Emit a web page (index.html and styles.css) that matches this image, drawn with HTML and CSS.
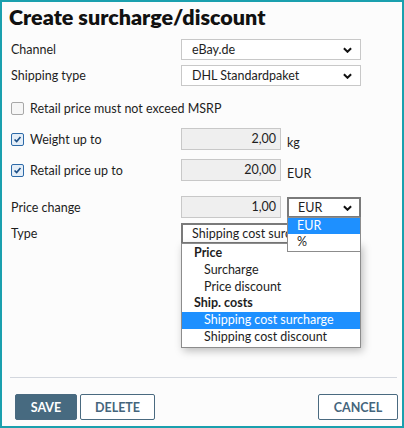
FILE: index.html
```html
<!DOCTYPE html>
<html lang="en">
<head>
    <meta charset="UTF-8">
    <title>Create surcharge/discount</title>
    <link rel="stylesheet" href="styles.css">
</head>
<body>
    <div class="dialog">
        <h1>Create surcharge/discount</h1>

        <div class="row row-channel">
            <label>Channel</label>
            <div class="select">eBay.de
                <svg class="chevron" viewBox="0 0 10 6"><polyline points="1,1 5,5 9,1"/></svg>
            </div>
        </div>
        <div class="row row-shipping">
            <label>Shipping type</label>
            <div class="select">DHL Standardpaket
                <svg class="chevron" viewBox="0 0 10 6"><polyline points="1,1 5,5 9,1"/></svg>
            </div>
        </div>

        <div class="check-row row-msrp">
            <span class="checkbox"></span>
            <span>Retail price must not exceed MSRP</span>
        </div>

        <div class="row row-weight">
            <div class="check-row">
                <span class="checkbox checked">
                    <svg viewBox="0 0 13 13"><polyline points="3,6.5 5.5,9 10,3.5"/></svg>
                </span>
                <span>Weight up to</span>
            </div>
            <div class="input">2,00</div>
            <span class="unit">kg</span>
        </div>
        <div class="row row-retail">
            <div class="check-row">
                <span class="checkbox checked">
                    <svg viewBox="0 0 13 13"><polyline points="3,6.5 5.5,9 10,3.5"/></svg>
                </span>
                <span>Retail price up to</span>
            </div>
            <div class="input">20,00</div>
            <span class="unit">EUR</span>
        </div>

        <div class="row row-price">
            <label>Price change</label>
            <div class="input">1,00</div>
            <div class="currency">
                <div class="select open small">EUR
                    <svg class="chevron" viewBox="0 0 10 6"><polyline points="1,1 5,5 9,1"/></svg>
                </div>
                <ul class="options currency-options">
                    <li class="selected">EUR</li>
                    <li>%</li>
                </ul>
            </div>
        </div>
        <div class="row row-type">
            <label>Type</label>
            <div class="type-wrap">
                <div class="select open"><span class="clip">Shipping cost surcharge</span></div>
                <ul class="options type-options">
                    <li class="group">Price</li>
                    <li class="sub">Surcharge</li>
                    <li class="sub">Price discount</li>
                    <li class="group">Ship. costs</li>
                    <li class="sub selected">Shipping cost surcharge</li>
                    <li class="sub">Shipping cost discount</li>
                </ul>
            </div>
        </div>

        <div class="spacer"></div>
        <hr class="divider">
        <div class="actions">
            <button class="btn btn-primary">SAVE</button>
            <button class="btn btn-delete">DELETE</button>
            <button class="btn btn-cancel">CANCEL</button>
        </div>
    </div>
</body>
</html>
```

FILE: styles.css
```css
html, body {
    margin: 0;
    padding: 0;
}
body {
    font-family: 'Lato', 'Noto Sans', sans-serif;
    font-size: 12.5px;
    color: #1e1e1e;
    background: #fcfcfc;
}
.dialog {
    box-sizing: border-box;
    width: 404px;
    height: 428px;
    border: 2px solid #1aa0ae;
    padding: 0 9px 0 9px;
    display: flex;
    flex-direction: column;
    background: #fcfcfc;
}
h1 {
    margin: 2px 0 0 -2px;
    font-size: 21.5px;
    line-height: 26px;
    font-weight: 800;
    color: #111;
}
.row {
    display: flex;
    align-items: center;
}
.row > label,
.row > .check-row {
    width: 170px;
    flex: none;
}
.row-channel { margin-top: 9px; }
.row-shipping { margin-top: 5px; }
.row-msrp { margin-top: 15px; }
.row-weight { margin-top: 12px; }
.row-retail { margin-top: 9px; }
.row-price { margin-top: 15px; }
.row-type { margin-top: 5px; align-items: flex-start; }
.row-type > label { margin-top: 3px; }

.select {
    position: relative;
    box-sizing: border-box;
    width: 180px;
    height: 21px;
    line-height: 19px;
    border: 1px solid #c8c8c8;
    background: #fff;
    padding-left: 10px;
    white-space: nowrap;
    overflow: hidden;
}
.select.open {
    border: 2px solid #7a7a7a;
    line-height: 17px;
    padding-left: 9px;
}
.select.small {
    width: 74px;
}
.clip {
    display: inline-block;
    width: 95px;
    overflow: hidden;
    white-space: nowrap;
    vertical-align: top;
}
.chevron {
    position: absolute;
    right: 8px;
    top: 7px;
    width: 9px;
    height: 6px;
    fill: none;
    stroke: #111;
    stroke-width: 2.2;
}
.select.open .chevron {
    top: 6px;
    right: 7px;
}

.check-row {
    display: flex;
    align-items: center;
    gap: 6px;
}
.checkbox {
    box-sizing: border-box;
    width: 13px;
    height: 13px;
    border: 1px solid #a8a8a8;
    border-radius: 2px;
    background: #f6f6f6;
    display: inline-block;
}
.checkbox.checked {
    border-color: #2d6aa8;
    background: #e4eef8;
}
.checkbox svg {
    display: block;
    width: 11px;
    height: 11px;
    fill: none;
    stroke: #1c4f86;
    stroke-width: 2;
}

.input {
    box-sizing: border-box;
    width: 100px;
    height: 22px;
    line-height: 20px;
    border: 1px solid #c8c8c8;
    background: #efefef;
    text-align: right;
    padding-right: 4px;
}
.unit {
    margin-left: 6px;
    height: 22px;
    box-sizing: border-box;
    padding-top: 7px;
    line-height: 16px;
}
.currency {
    position: relative;
    margin-left: 6px;
}
.type-wrap {
    position: relative;
}
.options {
    position: absolute;
    margin: 0;
    padding: 0;
    list-style: none;
    background: #fff;
    border: 1px solid #8c8c8c;
    box-sizing: border-box;
    z-index: 2;
}
.options li {
    height: 16.8px;
    line-height: 16.8px;
    white-space: nowrap;
}
.options li.selected {
    background: #1e90ff;
    color: #fff;
}
.currency-options {
    top: 20px;
    left: 0;
    width: 74px;
    z-index: 3;
}
.currency-options li {
    padding-left: 9px;
}
.type-options {
    top: 20px;
    left: 0;
    width: 180px;
    padding: 1px 0 1px 0;
    box-shadow: 2px 3px 8px rgba(0, 0, 0, 0.25);
}
.type-options li.group {
    padding-left: 12px;
    font-weight: 700;
}
.type-options li.sub {
    padding-left: 22px;
}

.spacer {
    flex: 1;
}
.divider {
    border: none;
    border-top: 1px solid #d3d7de;
    margin: 0 0 16px -1px;
    width: 387px;
}
.actions {
    display: flex;
    gap: 3px;
    padding-left: 4px;
    margin-bottom: 6px;
}
.btn {
    box-sizing: border-box;
    height: 26px;
    padding: 0 13px;
    font-family: 'Lato', 'Noto Sans', sans-serif;
    font-size: 12.5px;
    font-weight: 700;
    color: #45657c;
    background: #fff;
    border: 1px solid #4a6a80;
    border-radius: 2px;
}
.btn-primary {
    background: #476a80;
    color: #fff;
    width: 62px;
}
.btn-delete {
    width: 75px;
}
.btn-cancel {
    margin-left: auto;
    margin-right: -5px;
    width: 80px;
}
```
